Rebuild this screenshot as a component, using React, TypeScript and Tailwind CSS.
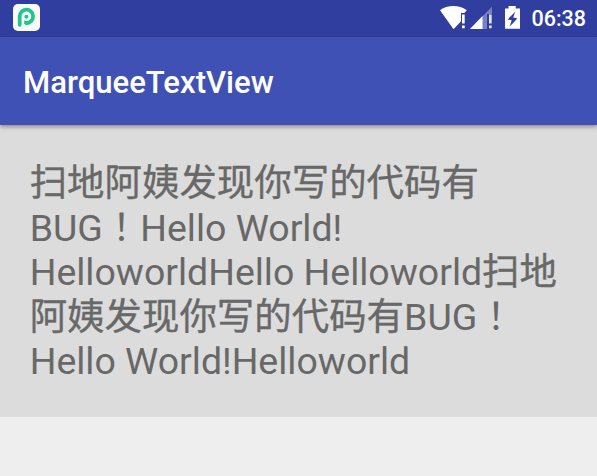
import type { ReactNode } from "react";

function Han({ children }: { children: ReactNode }) {
  return <span className="inline-block leading-none font-['Noto_Sans_CJK_SC',sans-serif] [-webkit-text-stroke:0.35px_#686868]">{children}</span>;
}

function Bang() {
  return <span className="inline-block leading-none font-['Noto_Sans_CJK_TC',sans-serif]" lang="zh-TW">！</span>;
}

function AppIcon() {
  return (
    <svg width="27" height="27" viewBox="0 0 27 27">
      <rect width="27" height="27" rx="5" fill="#fafafa" />
      <path d="M6.7 20.8V12.6a6.7 6.7 0 1 1 6.7 6.5" fill="none" stroke="#20c58a" strokeWidth="3.7" strokeLinecap="round" />
      <path d="M11.2 19.8V16.6L14 17.3V20.9Z" fill="#20c58a" />
      <circle cx="13.4" cy="12.8" r="2" fill="#20c58a" />
    </svg>
  );
}

function StatusIcons() {
  return (
    <svg width="82" height="37" viewBox="0 0 82 37" fill="#fff">
      <path d="M0 10.3C7.5 4.7 19 4.7 26.8 10.3L24.3 13H21v8.3L14 28.7h-.8Z" />
      <path d="M22 14.5h2.7v9H22zM22 25.5h2.7v2.8H22z" />
      <path d="M30 29 52 6.7V14h-5v15Z" opacity=".35" />
      <path d="M30 29 42.5 16v13Z" />
      <path d="M49 14.5h2.7v9H49zM49 25.5h2.7v2.8H49z" opacity=".85" />
      <path fillRule="evenodd" d="M68.5 6h7.2v2.4H80V28.8H65V8.4h3.5ZM75.2 11.7 67.7 19.4l4 .9-2 6.1 7.7-7.8-4.2-1Z" />
    </svg>
  );
}

export default function App() {
  return (
    <div className="flex h-[476px] w-[597px] flex-col overflow-hidden bg-[#eeeeee] font-[Roboto,'Noto_Sans_CJK_SC',sans-serif]">
      <div className="flex h-[37px] shrink-0 items-center bg-[#303f9f] pr-[11px] pl-[13px]">
        <div className="pb-[2px]"><AppIcon /></div>
        <div className="ml-auto flex items-center gap-[9px]">
          <StatusIcons />
          <span className="pt-px text-[21.5px] leading-[36px] font-medium text-white">06:38</span>
        </div>
      </div>
      <div className="z-10 flex h-[88px] shrink-0 items-center bg-[#3f51b5] pt-[5px] pl-[23px] shadow-[0_2px_4px_rgba(0,0,0,0.35)]">
        <h1 className="text-[31.1px] font-medium text-white">MarqueeTextView</h1>
      </div>
      <div className="grid h-[292px] shrink-0 auto-rows-[44.6px] content-start bg-[#dcdcdc] pt-[36px] pl-[29.7px] text-[37.45px] leading-[44.6px] whitespace-nowrap text-[#686868]">
        <div><Han>扫地阿姨发现你写的代码有</Han></div>
        <div>BUG<Bang />Hello World!</div>
        <div>HelloworldHello Helloworld<Han>扫地</Han></div>
        <div><Han>阿姨发现你写的代码有</Han>BUG<Bang /></div>
        <div>Hello World!Helloworld</div>
      </div>
    </div>
  );
}
